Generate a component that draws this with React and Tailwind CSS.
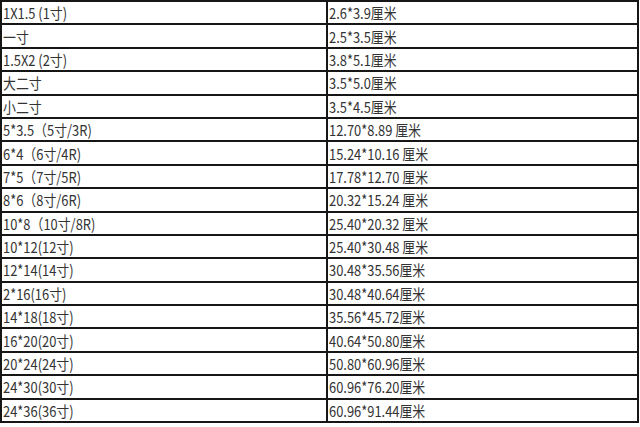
import React from "react";

const rows = [
  ["1X1.5 (1寸)", "2.6*3.9厘米"],
  ["一寸", "2.5*3.5厘米"],
  ["1.5X2 (2寸)", "3.8*5.1厘米"],
  ["大二寸", "3.5*5.0厘米"],
  ["小二寸", "3.5*4.5厘米"],
  ["5*3.5（5寸/3R)", "12.70*8.89 厘米"],
  ["6*4（6寸/4R)", "15.24*10.16 厘米"],
  ["7*5（7寸/5R)", "17.78*12.70 厘米"],
  ["8*6（8寸/6R)", "20.32*15.24 厘米"],
  ["10*8（10寸/8R)", "25.40*20.32 厘米"],
  ["10*12(12寸)", "25.40*30.48 厘米"],
  ["12*14(14寸)", "30.48*35.56厘米"],
  ["2*16(16寸)", "30.48*40.64厘米"],
  ["14*18(18寸)", "35.56*45.72厘米"],
  ["16*20(20寸)", "40.64*50.80厘米"],
  ["20*24(24寸)", "50.80*60.96厘米"],
  ["24*30(30寸)", "60.96*76.20厘米"],
  ["24*36(36寸)", "60.96*91.44厘米"],
];

const Cell = ({ children, right }) => (
  <div
    className={`flex items-center pl-[1px] ${
      right ? "flex-1 border-l-2 border-[#161616]" : "w-[324px]"
    }`}
  >
    <span className="inline-block origin-left [transform:scaleX(0.86)] whitespace-pre text-[15px] leading-none text-[#333]">
      {children}
    </span>
  </div>
);

const App = () => {
  return (
    <div
      className="w-[640px] h-[427px] bg-white"
      style={{ fontFamily: '"Noto Sans CJK SC", "Noto Sans", sans-serif' }}
    >
      <div className="w-[639px] h-[423px] border-2 border-[#161616] flex flex-col">
        {rows.map(([size, cm], i) => (
          <div
            key={i}
            className={`flex-1 flex ${i > 0 ? "border-t-2 border-[#161616]" : ""}`}
          >
            <Cell>{size}</Cell>
            <Cell right>{cm}</Cell>
          </div>
        ))}
      </div>
    </div>
  );
};

export default App;
